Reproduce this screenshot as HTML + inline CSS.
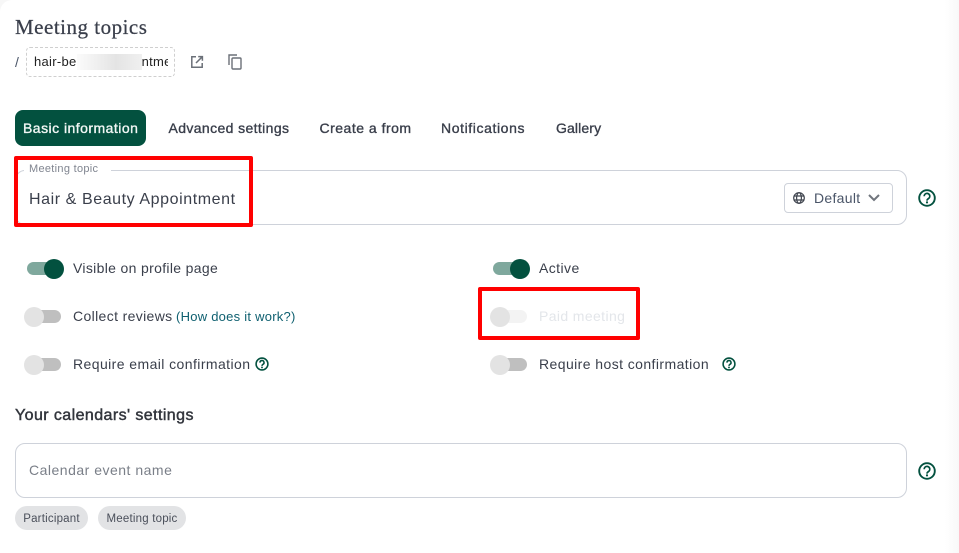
<!DOCTYPE html>
<html><head><meta charset="utf-8">
<style>
html,body{margin:0;padding:0;background:#f7f7f7}
body{width:959px;height:553px;position:relative;overflow:hidden;font-family:"Liberation Sans",sans-serif;color:#3a3f4b}
.page{position:absolute;left:0;top:0;width:959px;height:553px;background:#fff;border-top-left-radius:12px}
.t{position:absolute;white-space:nowrap;line-height:20px}
.sw{position:absolute;width:34px;height:13px;border-radius:7px;background:#bfbfbf}
.sw i{position:absolute;top:-3.5px;width:20px;height:20px;border-radius:50%;background:#e3e3e3}
.sw.on{background:#7fa89d}.sw.on i{background:#03513f;left:17px}
.sw.off i{left:-3px}
.sw.dis{background:#f3f3f3}
.box{position:absolute;box-sizing:border-box;border:1px solid #ced2da;border-radius:10px;background:#fff}
.red{position:absolute;box-sizing:border-box;border:4px solid #f00;border-radius:2px}
.tab{position:absolute;top:118px;font-size:14px;line-height:20px;color:#3a3f4b;white-space:nowrap;-webkit-text-stroke:.35px currentColor}
.chip{position:absolute;top:506px;height:24px;border-radius:12px;background:#e2e3e5;font-size:11.5px;line-height:26px;text-align:center;color:#4a4f5a;letter-spacing:.2px}
svg{position:absolute;display:block}
</style></head><body>
<div class="page"></div>
<div style="position:absolute;left:945px;top:0;width:14px;height:553px;background:linear-gradient(90deg,#fff,#f8f8f8)"></div>
<div class="t" style="left:15px;top:15px;font:21px/24px 'Liberation Serif',serif;color:#3a3f4b;letter-spacing:.5px;-webkit-text-stroke:.25px #3a3f4b">Meeting topics</div>
<div class="t" style="left:15px;top:52px;font-size:14px;color:#4a5568">/</div>
<div style="position:absolute;left:26px;top:47px;width:149px;height:30px;box-sizing:border-box;border:1px dashed #cfcfcf;border-radius:4px"></div>
<div class="t" style="left:34px;top:52px;font-size:13px;color:#222;width:134px;overflow:hidden;letter-spacing:.3px">hair-be<span style="display:inline-block;width:65px"></span>ntme</div>
<div style="position:absolute;left:77px;top:54px;width:65px;height:16px;background:linear-gradient(90deg,#fbfbfb,#e4e4e4 60%,#f0f0f0)"></div>
<svg style="left:190px;top:55px" width="14" height="14" viewBox="0 0 14 14" fill="none" stroke="#6b7078" stroke-width="1.5"><path d="M6 1.8H1.8v10.4h10.4V8M8.2 1.6h4.2v4.2M12.2 1.8L6 8"/></svg>
<svg style="left:228px;top:54px" width="14" height="16" viewBox="0 0 14 16" fill="none" stroke="#6b7078" stroke-width="1.4"><path d="M1 11V1h8"/><rect x="4" y="4" width="9" height="11" rx="1"/></svg>

<div style="position:absolute;left:15px;top:110px;width:131px;height:36px;background:#03513f;border-radius:8px"></div>
<div class="tab" style="left:23px;color:#f2f7f5;letter-spacing:.47px">Basic information</div>
<div class="tab" style="left:168.5px;letter-spacing:.38px">Advanced settings</div>
<div class="tab" style="left:319.5px;letter-spacing:.5px">Create a from</div>
<div class="tab" style="left:441px;letter-spacing:.6px">Notifications</div>
<div class="tab" style="left:556px;letter-spacing:.12px">Gallery</div>

<div class="box" style="left:15px;top:170px;width:892px;height:55px"></div>
<div style="position:absolute;left:24px;top:160px;width:87px;height:16px;background:#fff"></div>
<div class="t" style="left:29px;top:159px;font-size:11px;color:#808590;letter-spacing:.3px">Meeting topic</div>
<div class="t" style="left:29px;top:190px;font-size:16px;color:#3a3f4b;letter-spacing:.58px">Hair &amp; Beauty Appointment</div>
<div class="red" style="left:14px;top:156px;width:239px;height:71px"></div>

<div style="position:absolute;left:784px;top:183px;width:109px;height:30px;box-sizing:border-box;border:1px solid #ced2da;border-radius:4px"></div>
<svg style="left:793px;top:192px" width="12" height="12" viewBox="0 0 12 12" fill="none" stroke="#3f444e" stroke-width="1.2"><circle cx="6" cy="6" r="5.3"/><ellipse cx="6" cy="6" rx="2.4" ry="5.3"/><path d="M.8 4h10.4M.8 8h10.4"/></svg>
<div class="t" style="left:814px;top:188px;font-size:14px;color:#4a5568;letter-spacing:.3px">Default</div>
<svg style="left:868px;top:194px" width="12" height="8" viewBox="0 0 12 8" fill="none" stroke="#70757d" stroke-width="2"><path d="M1 1l5 5 5-5"/></svg>

<svg style="left:918px;top:189px" width="18" height="18" viewBox="0 0 18 18" fill="none" stroke="#03513f"><circle cx="9" cy="9" r="7.8" stroke-width="1.9"/><path d="M6.2 7.2a2.8 2.8 0 1 1 4.2 2.4c-1 .6-1.4 1-1.4 2" stroke-width="1.7"/><circle cx="9" cy="13.4" r=".7" fill="#03513f" stroke-width=".8"/></svg>

<div class="sw on" style="left:27px;top:262px"><i></i></div>
<div class="t" style="left:73px;top:258px;font-size:14px;letter-spacing:.33px">Visible on profile page</div>
<div class="sw on" style="left:493px;top:262px"><i></i></div>
<div class="t" style="left:539px;top:258px;font-size:14px;letter-spacing:.42px">Active</div>

<div class="sw off" style="left:27px;top:310px"><i></i></div>
<div class="t" style="left:73px;top:306px;font-size:14px;letter-spacing:.36px">Collect reviews</div>
<div class="t" style="left:176px;top:307px;font-size:13px;color:#0f6070;letter-spacing:.25px">(How does it work?)</div>
<div class="sw off dis" style="left:493px;top:310px"><i></i></div>
<div class="t" style="left:539px;top:306px;font-size:14px;color:#e3e6ea;letter-spacing:.38px">Paid meeting</div>
<div class="red" style="left:478px;top:287px;width:162px;height:53px"></div>

<div class="sw off" style="left:27px;top:358px"><i></i></div>
<div class="t" style="left:73px;top:354px;font-size:14px;letter-spacing:.42px">Require email confirmation</div>
<svg style="left:255px;top:357px" width="14" height="14" viewBox="0 0 18 18" fill="none" stroke="#03513f"><circle cx="9" cy="9" r="7.6" stroke-width="2"/><path d="M6.4 7.2a2.6 2.6 0 1 1 3.9 2.2c-.9.5-1.3 1-1.3 2" stroke-width="2"/><circle cx="9" cy="13.4" r=".7" fill="#03513f"/></svg>
<div class="sw off" style="left:493px;top:358px"><i></i></div>
<div class="t" style="left:539px;top:354px;font-size:14px;letter-spacing:.42px">Require host confirmation</div>
<svg style="left:722px;top:357px" width="14" height="14" viewBox="0 0 18 18" fill="none" stroke="#03513f"><circle cx="9" cy="9" r="7.6" stroke-width="2"/><path d="M6.4 7.2a2.6 2.6 0 1 1 3.9 2.2c-.9.5-1.3 1-1.3 2" stroke-width="2"/><circle cx="9" cy="13.4" r=".7" fill="#03513f"/></svg>

<div class="t" style="left:15px;top:405px;font-size:16px;color:#33363d;letter-spacing:.42px;-webkit-text-stroke:.45px #33363d;line-height:21px">Your calendars' settings</div>

<div class="box" style="left:15px;top:443px;width:892px;height:55px"></div>
<div class="t" style="left:29px;top:460px;font-size:14px;color:#7a7f88;letter-spacing:.5px">Calendar event name</div>
<svg style="left:918px;top:462px" width="18" height="18" viewBox="0 0 18 18" fill="none" stroke="#03513f"><circle cx="9" cy="9" r="7.8" stroke-width="1.9"/><path d="M6.2 7.2a2.8 2.8 0 1 1 4.2 2.4c-1 .6-1.4 1-1.4 2" stroke-width="1.7"/><circle cx="9" cy="13.4" r=".7" fill="#03513f" stroke-width=".8"/></svg>

<div class="chip" style="left:15px;width:73px">Participant</div>
<div class="chip" style="left:98px;width:88px">Meeting topic</div>
</body></html>
